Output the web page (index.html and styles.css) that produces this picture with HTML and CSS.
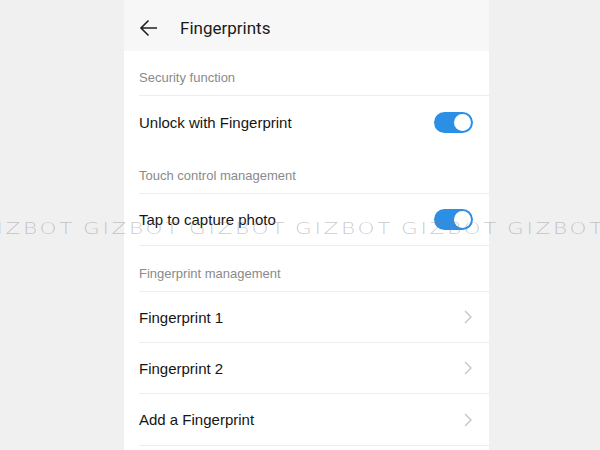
FILE: index.html
```html
<!DOCTYPE html>
<html lang="en">
<head>
  <meta charset="UTF-8">
  <title>Fingerprints</title>
  <link rel="stylesheet" href="styles.css">
</head>
<body>
  <div class="screen">
    <div class="topbar">
      <svg class="back" width="19" height="18" viewBox="0 0 19 18">
        <path d="M18 9H2M9.5 1.5L2 9l7.5 7.5" fill="none" stroke="#222" stroke-width="1.6"/>
      </svg>
      <span class="title">Fingerprints</span>
    </div>

    <div class="section first">Security function</div>
    <div class="row">
      <span>Unlock with Fingerprint</span>
      <span class="toggle"><span class="knob"></span></span>
    </div>

    <div class="section">Touch control management</div>
    <div class="row line">
      <span>Tap to capture photo</span>
      <span class="toggle"><span class="knob"></span></span>
    </div>

    <div class="section">Fingerprint management</div>
    <div class="row line short">
      <span>Fingerprint 1</span>
      <svg class="chev" width="8" height="14" viewBox="0 0 8 14"><path d="M1 1l6 6-6 6" fill="none" stroke="#c9c9c9" stroke-width="1.5"/></svg>
    </div>
    <div class="row line short">
      <span>Fingerprint 2</span>
      <svg class="chev" width="8" height="14" viewBox="0 0 8 14"><path d="M1 1l6 6-6 6" fill="none" stroke="#c9c9c9" stroke-width="1.5"/></svg>
    </div>
    <div class="row line">
      <span>Add a Fingerprint</span>
      <svg class="chev" width="8" height="14" viewBox="0 0 8 14"><path d="M1 1l6 6-6 6" fill="none" stroke="#c9c9c9" stroke-width="1.5"/></svg>
    </div>
  </div>

  <!-- watermark over everything -->
  <div class="watermark">
    <div class="marks">
      <span>GIZBOT</span><span>GIZBOT</span><span>GIZBOT</span><span>GIZBOT</span><span>GIZBOT</span><span>GIZBOT</span>
    </div>
  </div>
</body>
</html>
```

FILE: styles.css
```css
body {
  margin: 0;
  background: #f0f0f0;
  font-family: 'Liberation Sans', Arial, sans-serif;
  height: 450px;
  overflow: hidden;
}
.screen {
  width: 365px;
  margin-left: 124px;
  background: #fff;
  height: 450px;
}
.topbar {
  height: 51px;
  background: #f7f7f7;
  display: flex;
  align-items: center;
  padding-left: 15px;
  padding-top: 4px;
  box-sizing: border-box;
}
.back {
  display: block;
}
.title {
  font-family: Roboto, sans-serif;
  font-size: 17px;
  color: #1a1a1a;
  margin-left: 22px;
}
.section {
  height: 46px;
  box-sizing: border-box;
  padding-top: 20px;
  margin-left: 15px;
  font-size: 13px;
  line-height: 16px;
  color: #8a8a8a;
  border-bottom: 1px solid #ededed;
}
.section.first {
  height: 45px;
  padding-top: 19px;
}
.row {
  height: 52px;
  box-sizing: border-box;
  margin-left: 15px;
  padding-right: 16px;
  display: flex;
  align-items: center;
  justify-content: space-between;
  font-size: 15px;
  color: #151515;
}
.row.short {
  height: 51px;
}
.row.line {
  border-bottom: 1px solid #ededed;
}
.toggle {
  width: 39px;
  height: 21px;
  border-radius: 11px;
  background: #2b8fe6;
  display: flex;
  justify-content: flex-end;
  align-items: center;
  padding-right: 2px;
  box-sizing: border-box;
}
.knob {
  width: 17px;
  height: 17px;
  border-radius: 50%;
  background: #fff;
}
.chev {
  margin-right: 1px;
}
.watermark {
  position: absolute;
  top: 219px;
  left: 0;
  width: 600px;
  overflow: hidden;
  pointer-events: none;
}
.marks {
  margin-left: -23px;
  white-space: nowrap;
}
.marks span {
  display: inline-block;
  width: 106px;
  font-family: 'DejaVu Sans', sans-serif;
  font-weight: 200;
  font-size: 16px;
  letter-spacing: 2px;
  transform: scaleX(1.35);
  transform-origin: left center;
  color: rgba(130, 130, 130, 0.42);
}
```
